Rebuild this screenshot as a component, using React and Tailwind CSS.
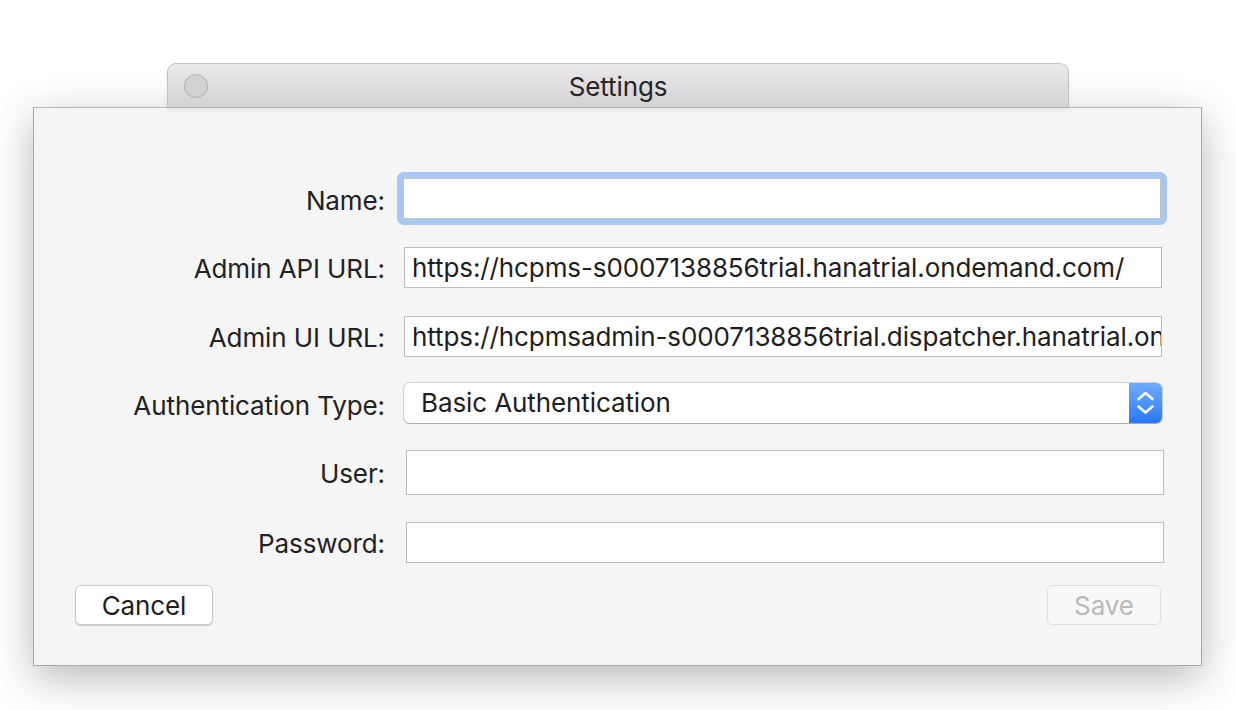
const font = { fontFamily: "Inter, 'Noto Sans', sans-serif" };

function Field({ label, value, top, tall, shift }) {
  return (
    <div className={`flex items-center ${top}`}>
      <div className="w-[351px] shrink-0 text-right text-[26px] leading-[30px] text-[#222] pt-[3px]">
        {label}
      </div>
      <div
        className={`${shift ? "ml-[21px]" : "ml-[19px]"} ${tall ? "h-[45px]" : "h-[41px]"} w-[758px] border border-[#bdbdbd] bg-white pl-[7px] flex items-center overflow-hidden whitespace-nowrap text-[26px] text-[#1e1e1e]`}
      >
        {value}
      </div>
    </div>
  );
}

export default function App() {
  return (
    <div
      className="w-[1236px] h-[710px] bg-white pt-[63px] overflow-hidden tracking-[-0.1px]"
      style={font}
    >
      <div className="relative z-10 ml-[167px] w-[902px] h-[44px] rounded-t-[9px] border border-b-0 border-[#c4c4c4] bg-gradient-to-b from-[#ebe9eb] to-[#d4d2d4] shadow-[0_3px_4px_rgba(0,0,0,0.08)] flex items-center">
        <div className="ml-[16px] w-[24px] h-[24px] rounded-full border border-[#b0b0b0] bg-[#d3d2d3]" />
        <div className="flex-1 text-center text-[26px] leading-[30px] text-[#262626] pr-[40px] pt-[3px]">
          Settings
        </div>
      </div>
      <div className="ml-[33px] w-[1169px] h-[559px] bg-[#f5f5f5] border border-[#a9a9a9] border-t-[#b9b9b9] shadow-[0_12px_40px_rgba(0,0,0,0.28)] pt-[64px]">
        <div className="flex items-center">
          <div className="w-[351px] shrink-0 text-right text-[26px] leading-[30px] text-[#222] pt-[4px]">
            Name:
          </div>
          <div className="ml-[12px] w-[770px] h-[53px] rounded-[7px] bg-[#a6c8f3] p-[6px]">
            <div className="w-full h-full border border-[#c2c2c2] bg-white" />
          </div>
        </div>
        <Field
          top="mt-[22px]"
          label="Admin API URL:"
          value="https://hcpms-s0007138856trial.hanatrial.ondemand.com/"
        />
        <Field
          top="mt-[28px]"
          label="Admin UI URL:"
          value="https://hcpmsadmin-s0007138856trial.dispatcher.hanatrial.ondemand.com/"
        />
        <div className="flex items-center mt-[26px]">
          <div className="w-[351px] shrink-0 text-right text-[26px] leading-[30px] text-[#222] pt-[6px]">
            Authentication Type:
          </div>
          <div className="ml-[19px] w-[758px] h-[40px] rounded-[6px] bg-white shadow-[0_0_0_1px_rgba(0,0,0,0.14),0_1px_1px_rgba(0,0,0,0.2)] flex items-center overflow-hidden">
            <div className="flex-1 pl-[17px] text-[26px] leading-[30px] text-[#1e1e1e]">
              Basic Authentication
            </div>
            <div className="w-[33px] h-full bg-gradient-to-b from-[#6fabfc] to-[#2679f7]">
              <svg width="33" height="40" viewBox="0 0 33 40" fill="none">
                <polyline
                  points="9.5,16 16.5,10 23.5,16"
                  stroke="white"
                  strokeWidth="2.6"
                  strokeLinecap="round"
                  strokeLinejoin="round"
                />
                <polyline
                  points="9.5,23.5 16.5,29.5 23.5,23.5"
                  stroke="white"
                  strokeWidth="2.6"
                  strokeLinecap="round"
                  strokeLinejoin="round"
                />
              </svg>
            </div>
          </div>
        </div>
        <Field top="mt-[27px]" label="User:" value="" tall shift />
        <Field top="mt-[27px]" label="Password:" value="" shift />
        <div className="flex justify-between mt-[22px] pl-[41px] pr-[40px]">
          <button className="w-[138px] h-[40px] rounded-[6px] bg-white border border-[#c9c9c9] shadow-[0_1px_1px_rgba(0,0,0,0.18)] text-[26px] leading-[30px] text-[#1e1e1e] pt-[2px]">
            Cancel
          </button>
          <button className="w-[114px] h-[40px] rounded-[6px] bg-[#f8f8f8] border border-[#dedede] text-[26px] leading-[30px] text-[#b9b9b9] pt-[2px]">
            Save
          </button>
        </div>
      </div>
    </div>
  );
}
